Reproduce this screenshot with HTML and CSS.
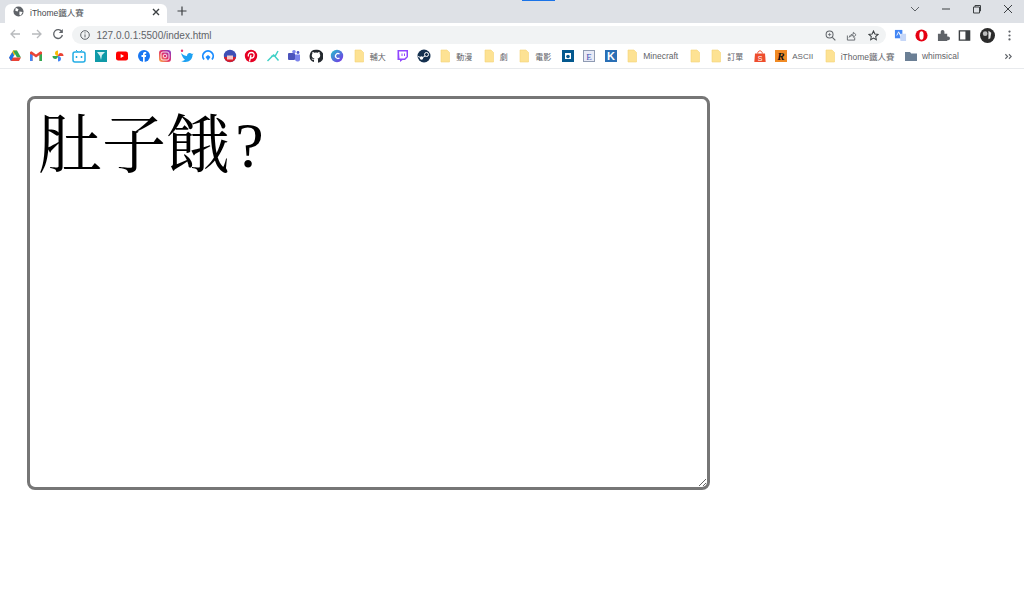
FILE: index.html
```html
<!DOCTYPE html>
<html lang="zh-Hant">
<head>
    <meta charset="UTF-8">
    <meta name="viewport" content="width=device-width, initial-scale=1.0">
    <title>iThome鐵人賽</title>
    <link rel="stylesheet" href="styles.css">
</head>
<body>
    <svg class="defs" width="0" height="0">
        <symbol id="folder" viewBox="0 0 14 14"><path d="M3 1h6l2.500 2.500V13H3z" fill="#fde293"/><path d="M3 1h6l2.500 2.500V13H3z" fill="none" stroke="#f5d577" stroke-width=".6"/></symbol>
    </svg>

    <!-- browser top -->
    <header class="browser">
        <div class="loading"></div>
        <div class="tabstrip">
            <div class="tab">
                <svg class="tab-icon" viewBox="0 0 12 12"><circle cx="6" cy="6" r="5.500" fill="#5f6368"/><path d="M3 2l3 1.500-1 2.500-2.500-.8zM7 6l3.500.5-2 3.800-1.500-.8z" fill="#fff"/></svg>
                <span class="tab-title">iThome鐵人賽</span>
                <svg class="tab-close" viewBox="0 0 10 10"><path d="M2 2l6 6M8 2l-6 6" stroke="#3c4043" stroke-width="1.400"/></svg>
            </div>
            <svg class="new-tab" viewBox="0 0 10 10"><path d="M5 .5v9M.5 5h9" stroke="#3c4043" stroke-width="1.200"/></svg>
            <div class="win-controls">
                <svg viewBox="0 0 10 10"><path d="M1 3l4 4 4-4" fill="none" stroke="#5f6368"/></svg>
                <svg viewBox="0 0 10 10"><path d="M1 5h8" stroke="#3c4043"/></svg>
                <svg viewBox="0 0 10 10"><path d="M1.500 3h6v6h-6zM3 3V1.500h5.500V7H7.500" fill="none" stroke="#3c4043"/></svg>
                <svg viewBox="0 0 10 10"><path d="M1 1l8 8M9 1l-8 8" stroke="#3c4043"/></svg>
            </div>
        </div>

        <div class="toolbar">
            <svg class="nav" viewBox="0 0 12 12"><path d="M11 6H2M6 2L2 6l4 4" fill="none" stroke="#b8babd" stroke-width="1.300"/></svg>
            <svg class="nav" viewBox="0 0 12 12"><path d="M1 6h9M6 2l4 4-4 4" fill="none" stroke="#b8babd" stroke-width="1.300"/></svg>
            <svg class="nav" viewBox="0 0 12 12"><path d="M10 4A4.400 4.400 0 1 0 10.400 7" fill="none" stroke="#5f6368" stroke-width="1.300"/><path d="M10.800 1v4h-4z" fill="#5f6368"/></svg>
            <div class="omnibox">
                <svg class="info" viewBox="0 0 10 10"><circle cx="5" cy="5" r="4.300" fill="none" stroke="#5f6368"/><path d="M5 4.400v3M5 2.400v1" stroke="#5f6368"/></svg>
                <span class="url">127.0.0.1:5500/index.html</span>
                <svg class="omni-icon" viewBox="0 0 12 12"><circle cx="5" cy="5" r="3.800" fill="none" stroke="#5f6368" stroke-width="1.100"/><path d="M8 8l3.300 3.300" stroke="#5f6368" stroke-width="1.300"/><path d="M3.200 5h3.600M5 3.200v3.600" stroke="#5f6368" stroke-width=".8"/></svg>
                <svg class="omni-icon" viewBox="0 0 12 12"><path d="M1.500 6v5h8V8" fill="none" stroke="#5f6368"/><path d="M3.500 8c.5-2.500 2.500-3.500 4.500-3.500V2.500L11 5.200 8 8V6C6 6 4.500 6.500 3.500 8z" fill="none" stroke="#5f6368" stroke-width=".9"/></svg>
                <svg class="omni-icon" viewBox="0 0 12 12"><path d="M6 1l1.500 3.300 3.500.4-2.600 2.400.7 3.500L6 8.900l-3.100 1.700.7-3.500L1 4.700l3.500-.4z" fill="none" stroke="#3c4043" stroke-width="1.100"/></svg>
            </div>
            <div class="extensions">
                <svg viewBox="0 0 14 14"><path d="M1 1h8v9H1z" fill="#4285f4"/><path d="M6 5h7v8H7z" fill="#c6d7f8"/><path d="M3 7l2-4 2 4" fill="none" stroke="#fff"/></svg>
                <svg viewBox="0 0 14 14"><circle cx="7" cy="7" r="6.500" fill="#e60012"/><ellipse cx="7" cy="7" rx="2.300" ry="4.500" fill="#fff"/></svg>
                <svg viewBox="0 0 14 14"><path d="M1 5h3V3a2 2 0 0 1 4 0v2h3v3h1a2 2 0 0 1 0 4h-1v1H1z" fill="#5f6368"/></svg>
                <svg viewBox="0 0 14 14"><path d="M1.500 2h11v10h-11z" fill="none" stroke="#3c4043" stroke-width="1.500"/><path d="M8 2h4.500v10H8z" fill="#3c4043"/></svg>
                <svg class="avatar" viewBox="0 0 16 16"><circle cx="8" cy="8" r="8" fill="#2b2b2b"/><circle cx="5.500" cy="6" r="2.500" fill="#bdbdbd"/><path d="M9 3l3 2-1 6-2 1z" fill="#e6e6e6"/></svg>
                <svg viewBox="0 0 14 14"><circle cx="7" cy="2.800" r="1.200" fill="#5f6368"/><circle cx="7" cy="7" r="1.200" fill="#5f6368"/><circle cx="7" cy="11.200" r="1.200" fill="#5f6368"/></svg>
            </div>
        </div>

        <nav class="bookmarks">
            <a class="bm"><svg viewBox="0 0 14 14"><path d="M5 1.500h4l-3 5.500H2z" fill="#fbbc04"/><path d="M9 1.500L13 8.500h-4L5 1.500z" fill="#34a853"/><path d="M1 8.500h12l-2 3.500H3z" fill="#ea4335"/><path d="M1 8.500l2 3.500 3-5.500L4.500 3z" fill="#1a73e8"/></svg></a>
            <a class="bm"><svg viewBox="0 0 14 14"><path d="M1 3v9h2.500V6L7 8.500 10.500 6v6H13V3l-1.500-.8L7 5.500 2.500 2.200z" fill="#ea4335"/><path d="M1 5v7h2.500V6z" fill="#4285f4"/><path d="M10.500 6v6H13V5z" fill="#34a853"/></svg></a>
            <a class="bm"><svg viewBox="0 0 14 14"><path d="M7 7V1.500a3 3 0 0 0-3 3c0 1 1 2.500 3 2.500z" fill="#fbbc04"/><path d="M7 7h5.500a3 3 0 0 0-3-3C8.500 4 7 5 7 7z" fill="#ea4335"/><path d="M7 7v5.500a3 3 0 0 0 3-3C10 8.500 9 7 7 7z" fill="#4285f4"/><path d="M7 7H1.500a3 3 0 0 0 3 3C5.500 10 7 9 7 7z" fill="#34a853"/></svg></a>
            <a class="bm"><svg viewBox="0 0 14 14"><rect x="1" y="3" width="12" height="10" rx="2" fill="none" stroke="#23ade5" stroke-width="1.500"/><path d="M4 1l2 2M10 1L8 3" stroke="#23ade5"/><path d="M4.500 7v2M9.500 7v2" stroke="#23ade5" stroke-width="1.500"/></svg></a>
            <a class="bm"><svg viewBox="0 0 14 14"><rect x="1" y="1" width="12" height="12" fill="#0f9aa8"/><path d="M3 3h8L8 6 7 11 6 7z" fill="#d8f2f3"/></svg></a>
            <a class="bm"><svg viewBox="0 0 14 14"><rect x="1" y="2.500" width="12" height="9" rx="2.200" fill="#f00"/><path d="M5.700 5v4L9 7z" fill="#fff"/></svg></a>
            <a class="bm"><svg viewBox="0 0 14 14"><circle cx="7" cy="7" r="6" fill="#1877f2"/><path d="M6 13V8H4.500V6H6V4.800C6 3.300 7 2.800 9.200 3v1.800H8.300c-.5 0-.6.200-.6.600V6h1.500l-.3 2H7.700v5z" fill="#fff"/></svg></a>
            <a class="bm"><svg viewBox="0 0 14 14"><defs><linearGradient id="ig" x1="0" y1="1" x2="1" y2="0"><stop offset="0" stop-color="#fdb44b"/><stop offset=".5" stop-color="#e1306c"/><stop offset="1" stop-color="#7b3fd0"/></linearGradient></defs><rect x="1" y="1" width="12" height="12" rx="3" fill="url(#ig)"/><rect x="3" y="3" width="8" height="8" rx="2" fill="none" stroke="#fff" stroke-width=".8"/><circle cx="7" cy="7" r="1.800" fill="none" stroke="#fff" stroke-width=".8"/></svg></a>
            <a class="bm"><svg viewBox="0 0 14 14"><path d="M1 4c2 2 4 3 6 3 0-3 3-4 5-2l1.500-.5-1 1.500c0 4-3 7-7 7-2 0-3.500-.5-4.500-1 1.500 0 3-.5 4-1.300C3.500 10.200 2 7 1 4z" fill="#1da1f2"/><circle cx="2" cy="1.800" r="1.200" fill="#e8336d"/></svg></a>
            <a class="bm"><svg viewBox="0 0 14 14"><path d="M3 10.500A5.200 5.200 0 1 1 11 10.500" fill="none" stroke="#1a8cff" stroke-width="1.800"/><path d="M4.500 8l2.500-2 2.500 2-2.500 3.500z" fill="#1a8cff"/></svg></a>
            <a class="bm"><svg viewBox="0 0 14 14"><circle cx="7" cy="7" r="6.200" fill="#3f4fb5"/><path d="M1 8h12c-.5 3-3 5-6 5s-5.500-2-6-5z" fill="#d81e2c"/><rect x="4" y="6.500" width="6" height="4" fill="#f6c9c9"/></svg></a>
            <a class="bm"><svg viewBox="0 0 14 14"><circle cx="7" cy="7" r="6.200" fill="#e60023"/><path d="M5.500 12.500L7 6M4.500 7.500C3.500 5 5.500 3.500 7.500 3.500S10.500 5 10 7 7.500 9.500 6.500 8.500" fill="none" stroke="#fff" stroke-width="1.300"/></svg></a>
            <a class="bm"><svg viewBox="0 0 14 14"><path d="M1.500 12L8 5.500M12 2L9 7.500l3.500 4M5 7.500l4-1" fill="none" stroke="#3fd0c6" stroke-width="1.500"/></svg></a>
            <a class="bm"><svg viewBox="0 0 14 14"><rect x="1" y="4" width="7" height="7" rx="1" fill="#4b53bc"/><circle cx="7" cy="2.800" r="1.800" fill="#7b83eb"/><circle cx="11" cy="3.500" r="1.400" fill="#5059c9"/><path d="M8 5.500h5v4a2.500 2.500 0 0 1-5 1z" fill="#7b83eb"/></svg></a>
            <a class="bm"><svg viewBox="0 0 14 14"><path d="M7 .8a6.300 6.300 0 0 0-2 12.300v-2.200c-1.800.4-2.200-.8-2.500-1.300l1.200.2c.5.700 1 .7 1.400.5 0-.4.200-.7.400-.9-1.500-.2-2.700-1-2.700-2.900 0-.7.200-1.200.6-1.700 0-.3-.2-.9.100-1.700 0 0 .6-.1 1.800.7a6 6 0 0 1 3.400 0c1.200-.8 1.800-.7 1.800-.7.300.8.100 1.400.1 1.700.4.500.6 1 .6 1.700 0 1.900-1.200 2.700-2.700 2.900.3.300.5.700.5 1.200v3.200A6.300 6.300 0 0 0 7 .8z" fill="#24292f"/></svg></a>
            <a class="bm"><svg viewBox="0 0 14 14"><defs><linearGradient id="cv" x1="0" y1="0" x2="1" y2="1"><stop offset="0" stop-color="#20c4cb"/><stop offset="1" stop-color="#7d2ae8"/></linearGradient></defs><circle cx="7" cy="7" r="6.200" fill="url(#cv)"/><path d="M9.500 5A2.500 2.500 0 1 0 9.500 9" fill="none" stroke="#fff" stroke-width="1.200"/></svg></a>
            <a class="bm"><svg viewBox="0 0 14 14"><use href="#folder"/></svg><span class="small">輔大</span></a>
            <a class="bm"><svg viewBox="0 0 14 14"><path d="M2.500 1H13v7l-3 3H7.500L5 13v-2H2.500z" fill="#9146ff"/><path d="M4 2.500h7.500v5L9.500 9.500h-5z" fill="#fff"/><path d="M7 4.500v2.500M9.500 4.500v2.500" stroke="#9146ff"/></svg></a>
            <a class="bm"><svg viewBox="0 0 14 14"><circle cx="7" cy="7" r="6.500" fill="#14304f"/><circle cx="9.500" cy="5.500" r="2" fill="none" stroke="#fff"/><circle cx="4.500" cy="9" r="1.700" fill="#fff"/><path d="M1 7.500l4 1.500 3-2" stroke="#fff" fill="none"/></svg></a>
            <a class="bm"><svg viewBox="0 0 14 14"><use href="#folder"/></svg><span class="small">動漫</span></a>
            <a class="bm"><svg viewBox="0 0 14 14"><use href="#folder"/></svg><span class="small">劇</span></a>
            <a class="bm"><svg viewBox="0 0 14 14"><use href="#folder"/></svg><span class="small">電影</span></a>
            <a class="bm"><svg viewBox="0 0 14 14"><rect x="1" y="1" width="12" height="12" fill="#04598f"/><path d="M4 4h6v6H4z" fill="#fff"/><circle cx="7" cy="7.500" r="1.800" fill="#04598f"/></svg></a>
            <a class="bm"><svg viewBox="0 0 14 14"><rect x="1.500" y="1.500" width="11" height="11" fill="#e8eaf6" stroke="#8f9bb3"/><text x="7" y="10.500" font-size="9" font-family="Liberation Serif" text-anchor="middle" fill="#3f51b5">E</text></svg></a>
            <a class="bm"><svg viewBox="0 0 14 14"><rect x="1" y="1" width="12" height="12" fill="#2a6fb5"/><text x="7" y="11" font-size="11" font-weight="700" font-family="Liberation Sans" text-anchor="middle" fill="#fff">K</text></svg></a>
            <a class="bm"><svg viewBox="0 0 14 14"><use href="#folder"/></svg><span>Minecraft</span></a>
            <a class="bm"><svg viewBox="0 0 14 14"><use href="#folder"/></svg></a>
            <a class="bm"><svg viewBox="0 0 14 14"><use href="#folder"/></svg><span class="small">訂單</span></a>
            <a class="bm"><svg viewBox="0 0 14 14"><path d="M2 4.500h10l.7 8.500H1.300z" fill="#ee4d2d"/><path d="M4.700 4.500C4.700 1 9.300 1 9.300 4.500" fill="none" stroke="#ee4d2d"/><text x="7" y="11.500" font-size="7" font-family="Liberation Sans" text-anchor="middle" fill="#fff">S</text></svg></a>
            <a class="bm"><svg viewBox="0 0 14 14"><rect x="1" y="1" width="12" height="12" fill="#f08a24"/><text x="7" y="11" font-size="11" font-weight="700" font-style="italic" font-family="Liberation Serif" text-anchor="middle" fill="#111">R</text></svg><span class="small">ASCII</span></a>
            <a class="bm"><svg viewBox="0 0 14 14"><use href="#folder"/></svg><span>iThome鐵人賽</span></a>
            <a class="bm"><svg viewBox="0 0 14 14"><path d="M1 3h5l1.200 1.500H13V12H1z" fill="#6b7f95"/></svg><span>whimsical</span></a>
            <svg class="more" viewBox="0 0 10 10"><path d="M1.500 2.500L4 5 1.500 7.500M5.500 2.500L8 5 5.500 7.500" fill="none" stroke="#5f6368" stroke-width="1.200"/></svg>
        </nav>
    </header>

    <main class="page">
        <textarea class="note">肚子餓&#8202;?</textarea>
    </main>
</body>
</html>
```

FILE: styles.css
```css
html, body {
    margin: 0;
    height: 100%;
}
body {
    background-color: #fff;
    font-family: "Liberation Sans", "Noto Sans CJK TC", sans-serif;
    overflow: hidden;
}
.defs {
    display: block;
    height: 0;
}
.browser {
    position: relative;
    border-bottom: 1px solid #e8eaed;
}
.loading {
    position: absolute;
    top: 0;
    left: 522px;
    width: 33px;
    height: 1px;
    background-color: #1a73e8;
}
.tabstrip {
    display: flex;
    align-items: flex-end;
    height: 23px;
    background-color: #dee1e6;
}
.tab {
    display: flex;
    align-items: center;
    box-sizing: border-box;
    width: 162px;
    height: 19px;
    margin-left: 5px;
    padding: 0 6px 4px 8px;
    background-color: #fff;
    border-radius: 6px 6px 0 0;
}
.tab-icon {
    width: 11px;
    height: 11px;
    margin-right: 6px;
}
.tab-title {
    flex: 1;
    font-size: 8.500px;
    color: #45494e;
}
.tab-close {
    width: 10px;
    height: 10px;
}
.new-tab {
    width: 10px;
    height: 10px;
    margin: 0 0 7px 10px;
}
.win-controls {
    display: flex;
    align-items: center;
    gap: 21px;
    margin: 0 11px 9px auto;
}
.win-controls svg {
    width: 10px;
    height: 10px;
}
.toolbar {
    display: flex;
    align-items: center;
    height: 21px;
    padding-left: 9px;
}
.nav {
    width: 12px;
    height: 12px;
    margin-right: 9.500px;
}
.omnibox {
    display: flex;
    align-items: center;
    box-sizing: border-box;
    width: 814px;
    height: 18px;
    margin: 3px 0 0 -2px;
    padding: 0 7px 0 8px;
    background-color: #f1f3f4;
    border-radius: 9px;
}
.info {
    width: 10px;
    height: 10px;
    margin-right: 7px;
}
.url {
    flex: 1;
    font-size: 10px;
    color: #5f6368;
}
.omni-icon {
    width: 11px;
    height: 11px;
    margin-left: 10.500px;
}
.extensions {
    display: flex;
    align-items: center;
    gap: 8.500px;
    margin: 3px 0 0 8px;
}
.extensions svg {
    width: 13px;
    height: 13px;
}
.extensions .avatar {
    width: 15px;
    height: 15px;
}
.bookmarks {
    display: flex;
    align-items: center;
    height: 24px;
    padding-left: 4px;
}
.bm {
    display: flex;
    align-items: center;
    padding: 0 3.750px;
    font-size: 8.500px;
    color: #5f6368;
    white-space: nowrap;
}
.bm svg {
    width: 14px;
    height: 14px;
}
.bm span {
    margin: 0 2px 0 4px;
}
.bm .small {
    font-size: 8px;
}
.more {
    width: 9px;
    height: 9px;
    margin-left: auto;
    margin-right: 11px;
}
.page {
    padding: 27px 0 0 27px;
}
.note {
    display: block;
    box-sizing: border-box;
    width: 683px;
    height: 394px;
    padding: 2px 2px 2px 8px;
    border: 3px solid #767676;
    border-radius: 8px;
    font-family: "Liberation Serif", "Noto Serif CJK TC", "AR PL UMing TW", "Noto Sans CJK TC", serif;
    font-size: 64px;
    line-height: 1.420;
    color: #000;
    background-color: #fff;
    outline: none;
}
```
